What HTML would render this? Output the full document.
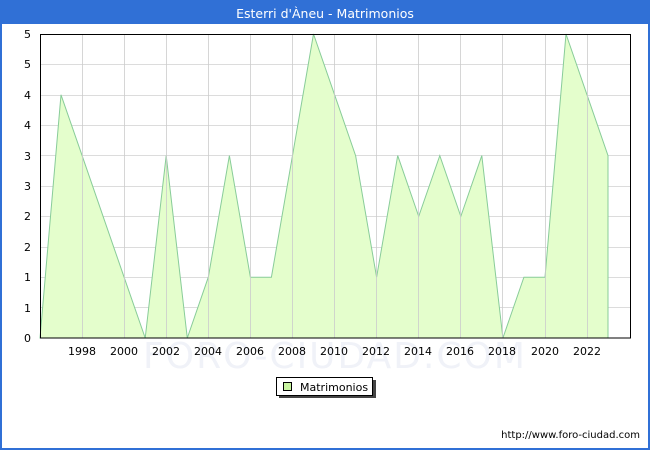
<!DOCTYPE html>
<html><head><meta charset="utf-8"><style>
body{margin:0;width:650px;height:450px;overflow:hidden;background:#fff;font-family:"DejaVu Sans","Liberation Sans",sans-serif}
</style></head><body>
<svg width="650" height="450" xmlns="http://www.w3.org/2000/svg" font-family="DejaVu Sans, Liberation Sans, sans-serif">
<rect x="0" y="0" width="650" height="450" fill="#3070d6"/>
<rect x="2" y="24" width="646" height="424" fill="#fff"/>
<text x="325" y="18" fill="#fff" font-size="12.5" text-anchor="middle">Esterri d'Àneu - Matrimonios</text>
<text x="335" y="368" fill="#f0f2f8" font-size="36" text-anchor="middle" letter-spacing="2">FORO-CIUDAD.COM</text>
<g stroke="#dcdcdc" stroke-width="1">
<line x1="40" x2="630" y1="64.5" y2="64.5"/><line x1="40" x2="630" y1="95.5" y2="95.5"/><line x1="40" x2="630" y1="125.5" y2="125.5"/><line x1="40" x2="630" y1="155.5" y2="155.5"/><line x1="40" x2="630" y1="186.5" y2="186.5"/><line x1="40" x2="630" y1="216.5" y2="216.5"/><line x1="40" x2="630" y1="247.5" y2="247.5"/><line x1="40" x2="630" y1="277.5" y2="277.5"/><line x1="40" x2="630" y1="307.5" y2="307.5"/>
</g>
<polygon fill="#e4fecc" stroke="#88cc99" stroke-width="1" points="40,338 40,338 61,94.8 82.1,155.6 103.1,216.4 124.1,277.2 145.2,338 166.2,155.6 187.3,338 208.3,277.2 229.4,155.6 250.4,277.2 271.4,277.2 292.5,155.6 313.5,34 334.6,94.8 355.6,155.6 376.6,277.2 397.7,155.6 418.7,216.4 439.8,155.6 460.8,216.4 481.8,155.6 502.9,338 523.9,277.2 545,277.2 566,34 587,94.8 608,155.6 608,338"/>
<g stroke="#cccccc" stroke-width="1" opacity="0.8">
<line x1="82.5" x2="82.5" y1="35" y2="338"/><line x1="124.5" x2="124.5" y1="35" y2="338"/><line x1="166.5" x2="166.5" y1="35" y2="338"/><line x1="208.5" x2="208.5" y1="35" y2="338"/><line x1="250.5" x2="250.5" y1="35" y2="338"/><line x1="292.5" x2="292.5" y1="35" y2="338"/><line x1="334.5" x2="334.5" y1="35" y2="338"/><line x1="376.5" x2="376.5" y1="35" y2="338"/><line x1="418.5" x2="418.5" y1="35" y2="338"/><line x1="460.5" x2="460.5" y1="35" y2="338"/><line x1="502.5" x2="502.5" y1="35" y2="338"/><line x1="545.5" x2="545.5" y1="35" y2="338"/><line x1="587.5" x2="587.5" y1="35" y2="338"/>
</g>
<rect x="40.5" y="34.5" width="590" height="303.5" fill="none" stroke="#000" stroke-width="1"/>
<g font-size="11" fill="#000" text-anchor="end">
<text x="31" y="38">5</text><text x="31" y="68">5</text><text x="31" y="99">4</text><text x="31" y="129">4</text><text x="31" y="160">3</text><text x="31" y="190">3</text><text x="31" y="220">2</text><text x="31" y="251">2</text><text x="31" y="281">1</text><text x="31" y="312">1</text><text x="31" y="342">0</text>
</g>
<g font-size="11" fill="#000" text-anchor="middle">
<text x="82" y="355">1998</text><text x="124" y="355">2000</text><text x="166" y="355">2002</text><text x="208" y="355">2004</text><text x="250" y="355">2006</text><text x="292" y="355">2008</text><text x="334" y="355">2010</text><text x="376" y="355">2012</text><text x="418" y="355">2014</text><text x="460" y="355">2016</text><text x="502" y="355">2018</text><text x="545" y="355">2020</text><text x="587" y="355">2022</text>
</g>
<rect x="279" y="380" width="97" height="18" fill="#444"/>
<rect x="276.5" y="377.5" width="96" height="18" fill="#fff" stroke="#000"/>
<rect x="283.5" y="382.5" width="8" height="8" fill="#c8f4a0" stroke="#000"/>
<text x="300" y="391" font-size="11">Matrimonios</text>
<text x="640" y="438" font-size="10" text-anchor="end">http://www.foro-ciudad.com</text>
</svg>
</body></html>
